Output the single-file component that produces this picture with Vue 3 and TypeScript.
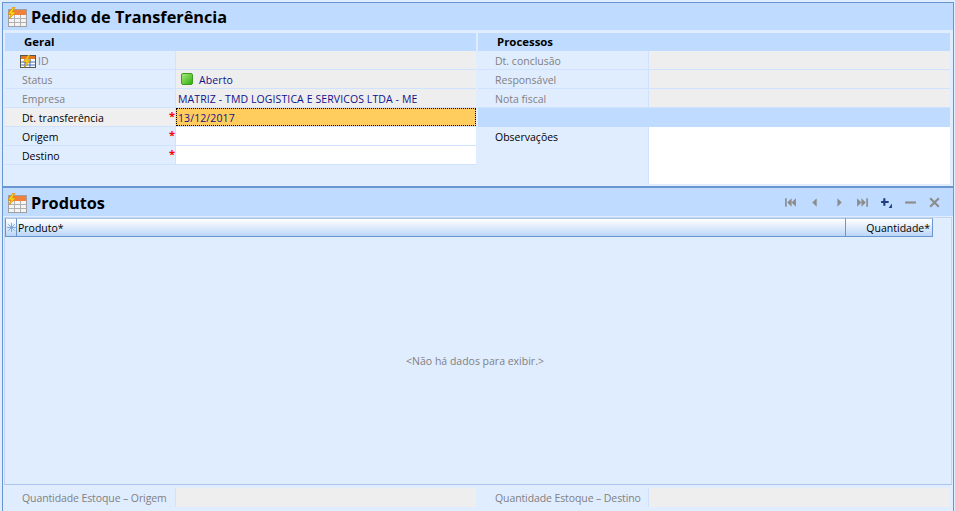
<script setup lang="ts">
interface Row { label: string; value?: string; kind: 'ro' | 'focus' | 'edit'; req?: boolean; icon?: string }
const leftRows: Row[] = [
  { label: 'ID', kind: 'ro', icon: 'id' },
  { label: 'Status', value: 'Aberto', kind: 'ro', icon: 'status' },
  { label: 'Empresa', value: 'MATRIZ - TMD LOGISTICA E SERVICOS LTDA - ME', kind: 'ro' },
  { label: 'Dt. transferência', value: '13/12/2017', kind: 'focus', req: true },
  { label: 'Origem', kind: 'edit', req: true },
  { label: 'Destino', kind: 'edit', req: true },
]
const rightRows: string[] = ['Dt. conclusão', 'Responsável', 'Nota fiscal']
</script>

<template>
  <div class="page">
    <section class="panel first">
      <header class="head">
        <svg class="ticon" viewBox="0 0 20 20">
          <rect x="1.5" y="2.5" width="18" height="17" fill="#f4f4f4" stroke="#a0a0a0"/>
          <rect x="2" y="3" width="17" height="5" fill="#f0803a"/>
          <path d="M2 11.500h17M2 15.500h17M7.500 8v11M13.500 8v11" stroke="#b0b0b0" fill="none"/>
          <path d="M6 0L1 7h3L2 12l7-7H5.500L8 0z" fill="#fbd21f" stroke="#e08a00" stroke-width=".8"/>
        </svg>
        <h1>Pedido de Transferência</h1>
      </header>
      <div class="form">
        <div class="col left">
          <div class="sec">Geral</div>
          <div v-for="r in leftRows" :key="r.label" class="row" :class="r.kind">
            <div class="lab">
              <svg v-if="r.icon === 'id'" class="idicon" viewBox="0 0 16 13">
                <rect x=".5" y=".5" width="15" height="12" fill="#fff" stroke="#555"/>
                <rect x="1" y="1" width="14" height="3" fill="#e8791f"/>
                <path d="M1 7h14M1 10h14M5 4v8M10 4v8" stroke="#3f6fb5" fill="none"/>
                <path d="M8 0L3 7h3L4 13l7-8H8l2-5z" fill="#f7c21c" stroke="#a06a00" stroke-width=".4"/>
              </svg>
              <span>{{ r.label }}</span>
              <i v-if="r.req" class="star">*</i>
            </div>
            <div class="val">
              <span v-if="r.icon === 'status'" class="dot"></span>
              <span v-if="r.value">{{ r.value }}</span>
            </div>
          </div>
        </div>
        <div class="col right">
          <div class="sec">Processos</div>
          <div v-for="t in rightRows" :key="t" class="row ro">
            <div class="lab">{{ t }}</div>
            <div class="val"></div>
          </div>
          <div class="band"></div>
          <div class="obs">
            <div class="lab">Observações</div>
            <div class="area"></div>
          </div>
        </div>
      </div>
    </section>

    <section class="panel second">
      <header class="head">
        <svg class="ticon" viewBox="0 0 20 20">
          <rect x="1.500" y="2.500" width="18" height="17" fill="#f4f4f4" stroke="#a0a0a0"/>
          <rect x="2" y="3" width="17" height="5" fill="#f0803a"/>
          <path d="M2 11.500h17M2 15.500h17M7.500 8v11M13.500 8v11" stroke="#b0b0b0" fill="none"/>
          <path d="M6 0L1 7h3L2 12l7-7H5.500L8 0z" fill="#fbd21f" stroke="#e08a00" stroke-width=".8"/>
        </svg>
        <h1>Produtos</h1>
        <nav class="nav">
          <svg viewBox="0 0 12 10" fill="#8c8c8c"><path d="M1 1h1.500v8H1zM7 1v8L3 5zM11 1v8L7 5z"/></svg>
          <svg viewBox="0 0 12 10" fill="#8c8c8c"><path d="M8 1v8L4 5z"/></svg>
          <svg viewBox="0 0 12 10" fill="#8c8c8c"><path d="M5 1v8l4-4z"/></svg>
          <svg viewBox="0 0 12 10" fill="#8c8c8c"><path d="M1 1v8l4-4zM5 1v8l4-4zM9.500 1H11v8H9.500z"/></svg>
          <svg viewBox="0 0 12 10"><path d="M4 1v7M1 4.500h7" stroke="#1f3f7f" stroke-width="2" fill="none"/><path d="M11 6v4H8z" fill="#1f3f7f"/></svg>
          <svg viewBox="0 0 12 10"><path d="M1 5h10" stroke="#8c8c8c" stroke-width="2"/></svg>
          <svg viewBox="0 0 12 10"><path d="M2 1l8 8M10 1l-8 8" stroke="#8c8c8c" stroke-width="2" fill="none"/></svg>
        </nav>
      </header>
      <div class="grid">
        <div class="ghead">
          <div class="gc ind">
            <svg viewBox="0 0 9 9" width="9" height="9"><path d="M4.500 0v9M0 4.500h9M1.300 1.300l6.400 6.400M7.700 1.300L1.300 7.700" stroke="#7fa8dc" stroke-width="1"/></svg>
          </div>
          <div class="gc prod">Produto*</div>
          <div class="gc qty">Quantidade*</div>
        </div>
        <div class="empty">&lt;Não há dados para exibir.&gt;</div>
      </div>
      <footer class="foot">
        <div class="fcell"><div class="flab">Quantidade Estoque – Origem</div><div class="fval"></div></div>
        <div class="fcell r"><div class="flab">Quantidade Estoque – Destino</div><div class="fval"></div></div>
      </footer>
    </section>
  </div>
</template>

<style>
html, body { margin: 0; background: #e0edff; }
</style>

<style scoped>
.page { width: 955px; height: 511px; box-sizing: border-box; padding: 2px 1px 0 2px; background: #e0edff; display: flex; flex-direction: column; overflow: hidden; font: 10.5px "Open Sans", "DejaVu Sans", sans-serif; color: #000; }
.panel { border-left: 1px solid #6a96d0; border-right: 1px solid #6a96d0; }
.first { height: 184px; box-sizing: border-box; border-top: 1px solid #6a96d0; flex: none; }
.second { flex: 1; border-top: 2px solid #6a96d0; display: flex; flex-direction: column; min-height: 0; }
.head { height: 27px; background: #bfdbff; display: flex; align-items: center; padding-left: 4px; box-sizing: border-box; flex: none; }
.second .head { height: 28px; }
.ticon { width: 20px; height: 20px; flex: none; margin-top: 1px; }
h1 { margin: 1px 0 0 4px; font: bold 16.3px "Open Sans", sans-serif; color: #000; white-space: nowrap; }
.form { display: flex; gap: 2px; padding: 3px 2px 0; }
.col { display: flex; flex-direction: column; }
.left { width: 471px; }
.right { width: 472px; }
.sec { height: 18px; line-height: 18px; background: #bfdbff; font-weight: 700; font-size: 11.400px; padding-left: 19px; }
.row { height: 19px; display: flex; box-sizing: border-box; border-bottom: 1px solid #cfe2ff; }
.lab { width: 171px; flex: none; padding: 2px 0 0 17px; box-sizing: border-box; line-height: 16px; color: #000; position: relative; display: flex; align-items: center; border-right: 1px solid #cfe2ff; }
.ro .lab { color: #808080; }
.idicon { width: 16px; height: 13px; margin: 0 2px 0 -2px; flex: none; }
.star { position: absolute; right: 0; top: 1px; color: #f00; font-style: normal; font-weight: 700; font-size: 11px; line-height: 14px; }
.val { flex: 1; padding: 2px 0 0 2px; line-height: 16px; box-sizing: border-box; display: flex; align-items: center; color: #10108c; letter-spacing: .1px; }
.ro .val { background: #eee; }
.edit .val { background: #fff; }
.focus .lab { background: #efefef; }
.focus .val { background: #ffcc5e; outline: 1px dotted #000; outline-offset: -1px; }
.dot { width: 12px; height: 12px; margin: -2px 6px 0 3px; border-radius: 2px; background: linear-gradient(135deg, #a8ea7a, #2fae0f); border: 1px solid #3e9a22; box-sizing: border-box; flex: none; }
.band { height: 19px; background: #bfdbff; }
.obs { height: 57px; display: flex; }
.obs .lab { align-items: flex-start; height: 57px; }
.area { flex: 1; background: #fff; }
.nav { margin-left: auto; display: flex; gap: 11px; padding-right: 12px; }
.nav svg { width: 13px; height: 11px; }
.grid { flex: 1; margin: 1px 1px 0; border: 1px solid #c4d6ee; border-bottom-color: #a8c5ee; display: flex; flex-direction: column; min-height: 0; }
.ghead { display: flex; height: 19px; width: 928px; flex: none; }
.gc { box-sizing: border-box; height: 19px; line-height: 18px; background: linear-gradient(#fff, #bcd6f8); border: 1px solid #6a96d0; border-left-width: 0; border-top-color: #a9c4e9; white-space: nowrap; }
.ind { width: 12px; border-left-width: 1px; display: flex; align-items: center; justify-content: center; }
.prod { flex: 1; padding-left: 1px; }
.qty { width: 87px; text-align: right; padding-right: 2px; }
.empty { flex: 1; display: flex; align-items: center; justify-content: center; color: #808080; padding-right: 6px; }
.foot { flex: none; height: 26px; display: flex; gap: 2px; padding: 3px 2px 4px; box-sizing: border-box; }
.fcell { display: flex; width: 471px; height: 19px; }
.fcell.r { width: 472px; }
.flab { width: 171px; flex: none; box-sizing: border-box; padding: 2px 0 0 17px; line-height: 16px; color: #808080; border-right: 1px solid #cfe2ff; white-space: nowrap; letter-spacing: -.1px; }
.fval { flex: 1; background: #eee; }
</style>
